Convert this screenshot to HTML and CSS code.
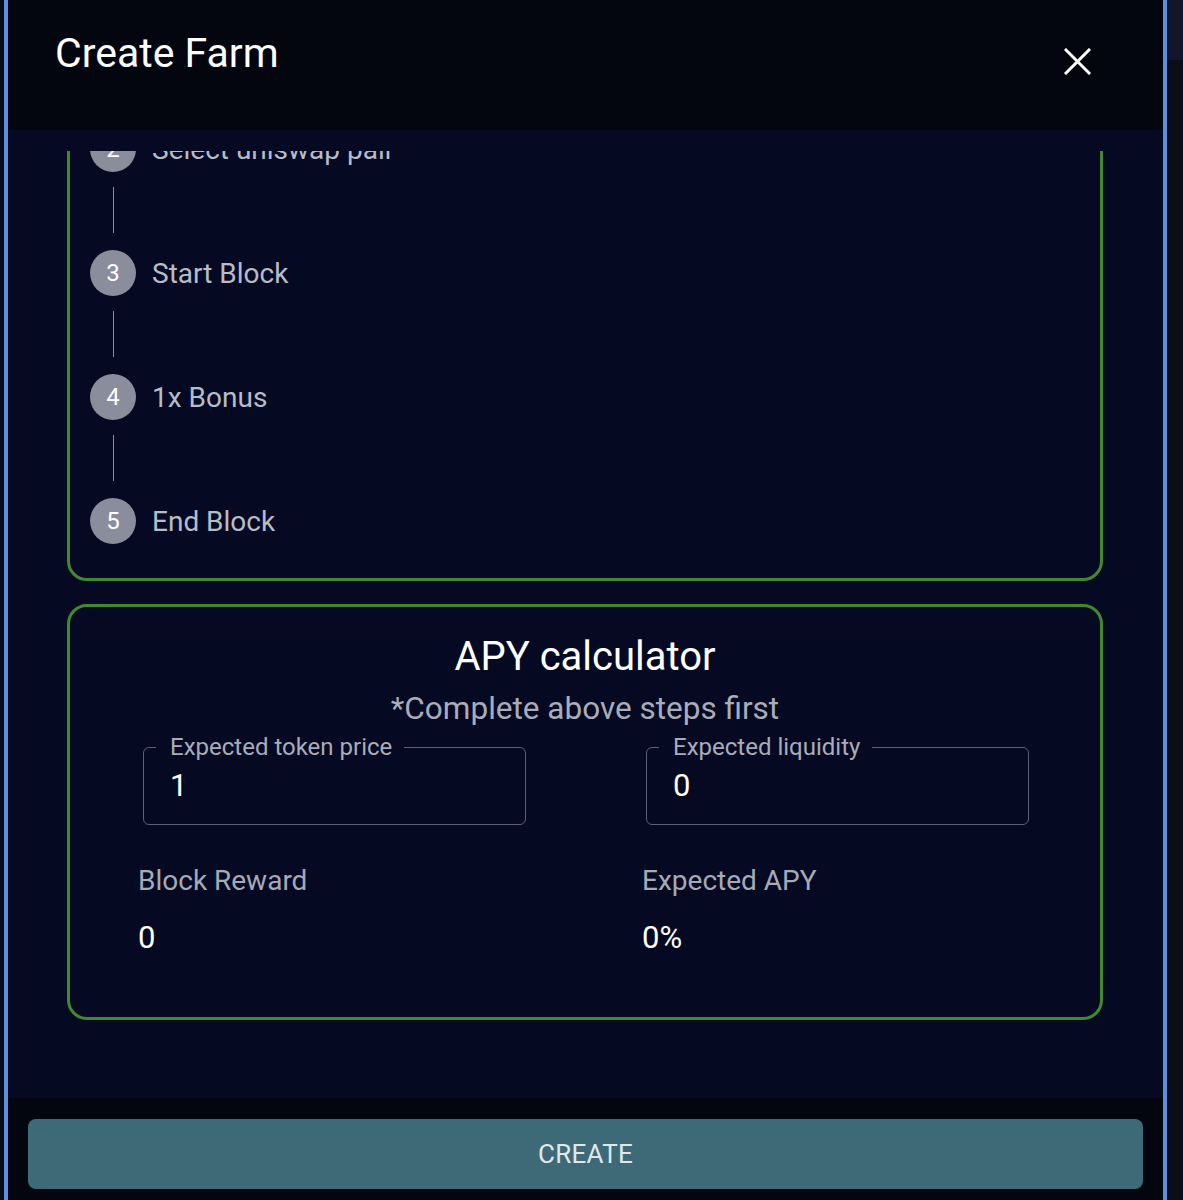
FILE: index.html
```html
<!DOCTYPE html>
<html lang="en">
<head>
<meta charset="utf-8">
<title>Create Farm</title>
<link rel="stylesheet" href="styles.css">
</head>
<body>
<div class="page">
  <div class="gutter-left"></div>
  <div class="dialog">
    <header class="dialog-header">
      <h1 class="dialog-title">Create Farm</h1>
      <button class="close-btn" aria-label="Close">
        <svg width="27" height="27" viewBox="0 0 27 27"><path d="M2 2 L25 25 M25 2 L2 25" stroke="#ffffff" stroke-width="3" stroke-linecap="square" fill="none"/></svg>
      </button>
    </header>
    <main class="dialog-body">
      <div class="scroll">
        <section class="card steps-card">
          <div class="step"><span class="step-num">2</span><span class="step-label">Select uniswap pair</span></div>
          <div class="connector"><span class="connector-line"></span></div>
          <div class="step"><span class="step-num">3</span><span class="step-label">Start Block</span></div>
          <div class="connector"><span class="connector-line"></span></div>
          <div class="step"><span class="step-num">4</span><span class="step-label">1x Bonus</span></div>
          <div class="connector"><span class="connector-line"></span></div>
          <div class="step"><span class="step-num">5</span><span class="step-label">End Block</span></div>
        </section>
        <section class="card apy-card">
          <h2 class="apy-title">APY calculator</h2>
          <p class="apy-sub">*Complete above steps first</p>
          <div class="fields">
            <fieldset class="field">
              <legend class="field-label">Expected token price</legend>
              <div class="field-value">1</div>
            </fieldset>
            <fieldset class="field">
              <legend class="field-label">Expected liquidity</legend>
              <div class="field-value">0</div>
            </fieldset>
          </div>
          <div class="stats">
            <div class="stat">
              <div class="stat-label">Block Reward</div>
              <div class="stat-value">0</div>
            </div>
            <div class="stat">
              <div class="stat-label">Expected APY</div>
              <div class="stat-value">0%</div>
            </div>
          </div>
        </section>
      </div>
    </main>
    <footer class="dialog-footer">
      <button class="create-btn">CREATE</button>
    </footer>
  </div>
  <div class="gutter-right"><div class="gutter-right-top"></div></div>
</div>
</body>
</html>
```

FILE: styles.css
```css
* { box-sizing: border-box; }

html, body {
  margin: 0;
  padding: 0;
  background: #0a0d17;
  font-family: Roboto, "Open Sans", "Liberation Sans", sans-serif;
}

.page {
  display: flex;
  height: 1200px;
  overflow: hidden;
}

.gutter-left {
  width: 4px;
  background: #0a0d18;
}

.dialog {
  width: 1163px;
  border-left: 4px solid #5b8fe0;
  border-right: 4px solid #5b8fe0;
  display: flex;
  flex-direction: column;
  height: 1200px;
}

.gutter-right {
  flex: 1;
  background: #0b0e16;
}

.gutter-right-top {
  height: 60px;
  background: #13162a;
}

.dialog-header {
  height: 130px;
  background: #03050f;
  display: flex;
  justify-content: space-between;
  align-items: flex-start;
  padding: 29px 72px 0 47px;
}

.dialog-title {
  margin: 0;
  font-size: 41px;
  line-height: 48px;
  font-weight: 400;
  color: #ffffff;
}

.close-btn {
  margin-top: 19px;
  padding: 0;
  border: 0;
  background: transparent;
  width: 27px;
  height: 27px;
  display: block;
}

.close-btn svg { display: block; }

.dialog-body {
  height: 968px;
  background: #050a22;
  padding-top: 21px;
}

.scroll {
  height: 947px;
  overflow: hidden;
  display: flex;
  flex-direction: column;
  justify-content: flex-end;
  padding-bottom: 78px;
}

.card {
  flex: none;
  margin: 0 60px 0 59px;
  border: 3px solid #3f8a2e;
  border-radius: 20px;
}

.steps-card {
  padding: 20px 20px 34px 20px;
}

.apy-card {
  margin-top: 23px;
  padding: 27px 0 61px 0;
}

.step {
  display: flex;
  align-items: center;
  height: 46px;
}

.step-num {
  flex: none;
  width: 46px;
  height: 46px;
  border-radius: 50%;
  background: #8a8d9b;
  color: #ffffff;
  font-size: 24px;
  display: flex;
  align-items: center;
  justify-content: center;
}

.step-label {
  margin-left: 16px;
  font-size: 28px;
  color: #b8bcc9;
}

.connector {
  height: 78px;
  padding-top: 15px;
  padding-left: 23px;
}

.connector-line {
  display: block;
  width: 1px;
  height: 46px;
  background: #8a8d9b;
}

.apy-title {
  margin: 0;
  text-align: center;
  font-size: 40px;
  line-height: 46px;
  font-weight: 400;
  color: #ffffff;
}

.apy-sub {
  margin: 11px 0 0 0;
  text-align: center;
  font-size: 31.5px;
  line-height: 36px;
  color: #a9acb9;
}

.fields {
  margin-top: 7px;
  display: grid;
  grid-template-columns: 383px 383px;
  column-gap: 120px;
  padding-left: 73px;
}

.field {
  margin: 0;
  padding: 0 0 20px 12px;
  border: 1px solid #5b6174;
  border-radius: 6px;
  min-width: 0;
}

.field-label {
  padding: 0 12px 0 14px;
  font-size: 24px;
  line-height: 26px;
  color: #a9acb9;
}

.field-value {
  margin-top: 8px;
  padding-left: 14px;
  font-size: 31px;
  line-height: 36px;
  color: #ffffff;
}

.stats {
  margin-top: 40px;
  display: grid;
  grid-template-columns: 384px 384px;
  column-gap: 120px;
  padding-left: 68px;
}

.stat-label {
  font-size: 28px;
  line-height: 32px;
  color: #a6a9b6;
}

.stat-value {
  margin-top: 23px;
  font-size: 31px;
  line-height: 36px;
  color: #ffffff;
}

.dialog-footer {
  flex: 1;
  background: #03050f;
  padding: 21px 20px 0 20px;
}

.create-btn {
  display: block;
  width: 100%;
  height: 70px;
  border: 0;
  border-radius: 8px;
  background: #3e6a78;
  color: #dfe8eb;
  font-family: Roboto, "Open Sans", "Liberation Sans", sans-serif;
  font-size: 26px;
  letter-spacing: 0.3px;
}
```
